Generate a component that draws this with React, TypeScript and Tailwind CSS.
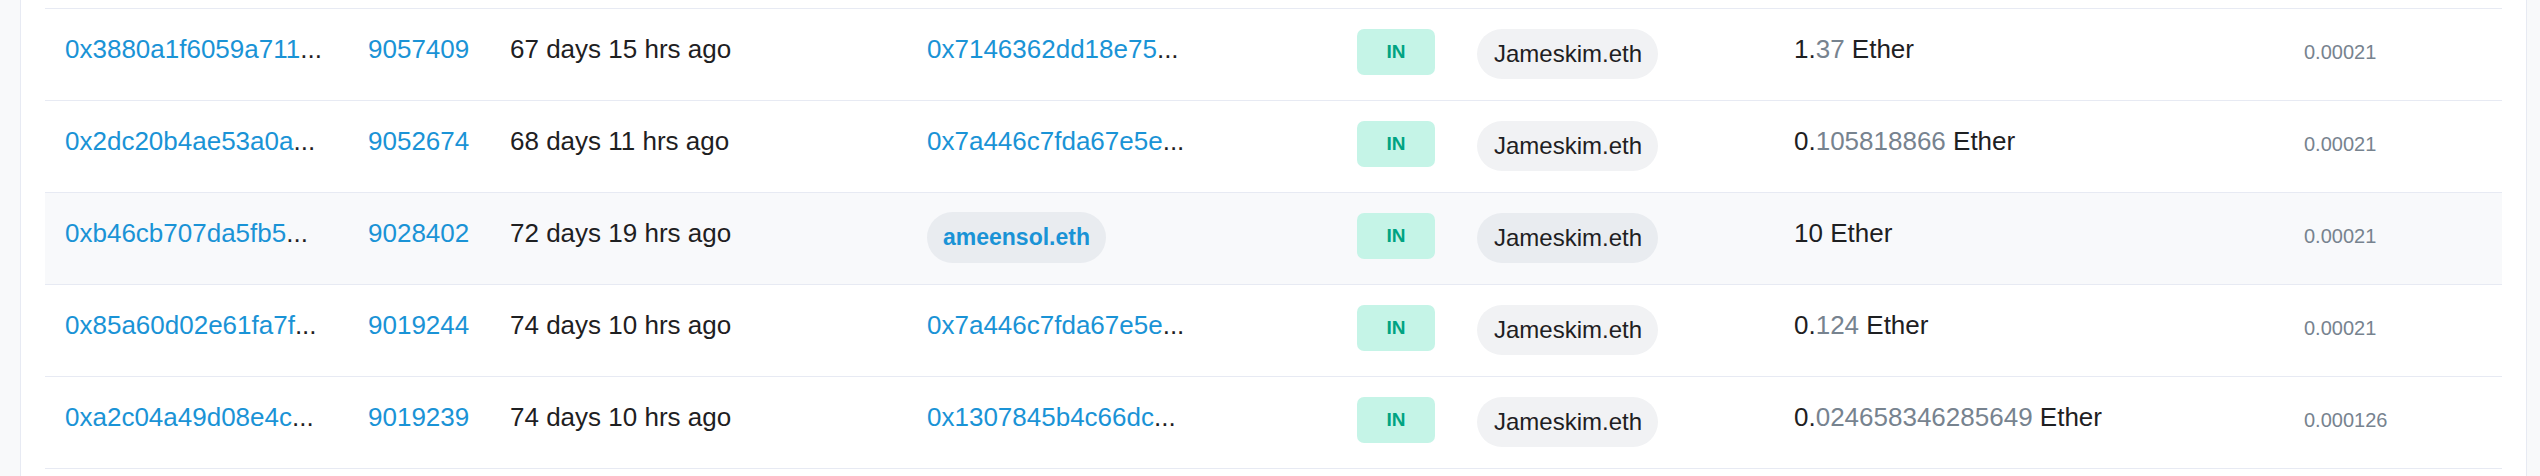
import React from "react";

type Row = {
  hash: string;
  block: string;
  age: string;
  from: { kind: "addr" | "name"; text: string };
  valInt: string;
  valFrac: string;
  fee: string;
  hover?: boolean;
};

const rows: Row[] = [
  { hash: "0x3880a1f6059a711", block: "9057409", age: "67 days 15 hrs ago", from: { kind: "addr", text: "0x7146362dd18e75" }, valInt: "1.", valFrac: "37", fee: "0.00021" },
  { hash: "0x2dc20b4ae53a0a", block: "9052674", age: "68 days 11 hrs ago", from: { kind: "addr", text: "0x7a446c7fda67e5e" }, valInt: "0.", valFrac: "105818866", fee: "0.00021" },
  { hash: "0xb46cb707da5fb5", block: "9028402", age: "72 days 19 hrs ago", from: { kind: "name", text: "ameensol.eth" }, valInt: "10", valFrac: "", fee: "0.00021", hover: true },
  { hash: "0x85a60d02e61fa7f", block: "9019244", age: "74 days 10 hrs ago", from: { kind: "addr", text: "0x7a446c7fda67e5e" }, valInt: "0.", valFrac: "124", fee: "0.00021" },
  { hash: "0xa2c04a49d08e4c", block: "9019239", age: "74 days 10 hrs ago", from: { kind: "addr", text: "0x1307845b4c66dc" }, valInt: "0.", valFrac: "024658346285649", fee: "0.000126" },
];

const grid =
  "grid grid-cols-[303px_142px_417px_430px_120px_317px_510px_219px] items-start";

function RowView({ r }: { r: Row }) {
  return (
    <div
      className={`${grid} h-[92px] border-t border-[#e7eaf3] ${r.hover ? "bg-[#f8f9fb]" : "bg-white"}`}
    >
      <div className="px-5 pt-[22px] leading-[36px] whitespace-nowrap">
        <span className="text-[#1a93d6]">{r.hash}</span>
        <span className="text-[#1e2022]">...</span>
      </div>
      <div className="px-5 pt-[22px] leading-[36px] text-[#1a93d6]">{r.block}</div>
      <div className="px-5 pt-[22px] leading-[36px] text-[#1e2022] whitespace-nowrap">{r.age}</div>
      <div className="px-5 whitespace-nowrap">
        {r.from.kind === "addr" ? (
          <div className="pt-[22px] leading-[36px]">
            <span className="text-[#1a93d6]">{r.from.text}</span>
            <span className="text-[#1e2022]">...</span>
          </div>
        ) : (
          <div className="pt-[19px]">
            <span className="inline-flex h-[51px] items-center rounded-full bg-[#e9ecf0] px-4 font-bold text-[#1a93d6] text-[23px]">
              {r.from.text}
            </span>
          </div>
        )}
      </div>
      <div className="px-5 pt-[20px]">
        <span className="flex h-[46px] w-[78px] items-center justify-center rounded-[7px] bg-[#c5f4e7] text-[19px] font-bold text-[#00a382]">
          IN
        </span>
      </div>
      <div className="px-5 pt-[20px]">
        <span
          className={`inline-flex h-[50px] items-center rounded-full pl-[17px] pr-4 text-[24px] text-[#1e2022] ${r.hover ? "bg-[#e9ecf0]" : "bg-[#f1f2f4]"}`}
        >
          Jameskim.eth
        </span>
      </div>
      <div className="px-5 pt-[22px] leading-[36px] text-[#1e2022] whitespace-nowrap">
        {r.valInt}
        {r.valFrac && <span className="text-[#77838f]">{r.valFrac}</span>} Ether
      </div>
      <div className="px-5 pt-[28px] text-[20px] leading-[30px] text-[#77838f]">{r.fee}</div>
    </div>
  );
}

export default function App() {
  return (
    <div
      className="h-[476px] w-[2540px] overflow-hidden bg-[#f8f9fa] pl-[20px] pr-[13px] text-[26px]"
      style={{ fontFamily: '"Liberation Sans", Arial, Helvetica, sans-serif' }}
    >
      <div className="h-full border-x border-[#e7eaf3] bg-white px-6">
        <div className="h-[8px]" />
        {rows.map((r, i) => (
          <RowView key={i} r={r} />
        ))}
        <div className="h-[20px] border-t border-[#e7eaf3]" />
      </div>
    </div>
  );
}
